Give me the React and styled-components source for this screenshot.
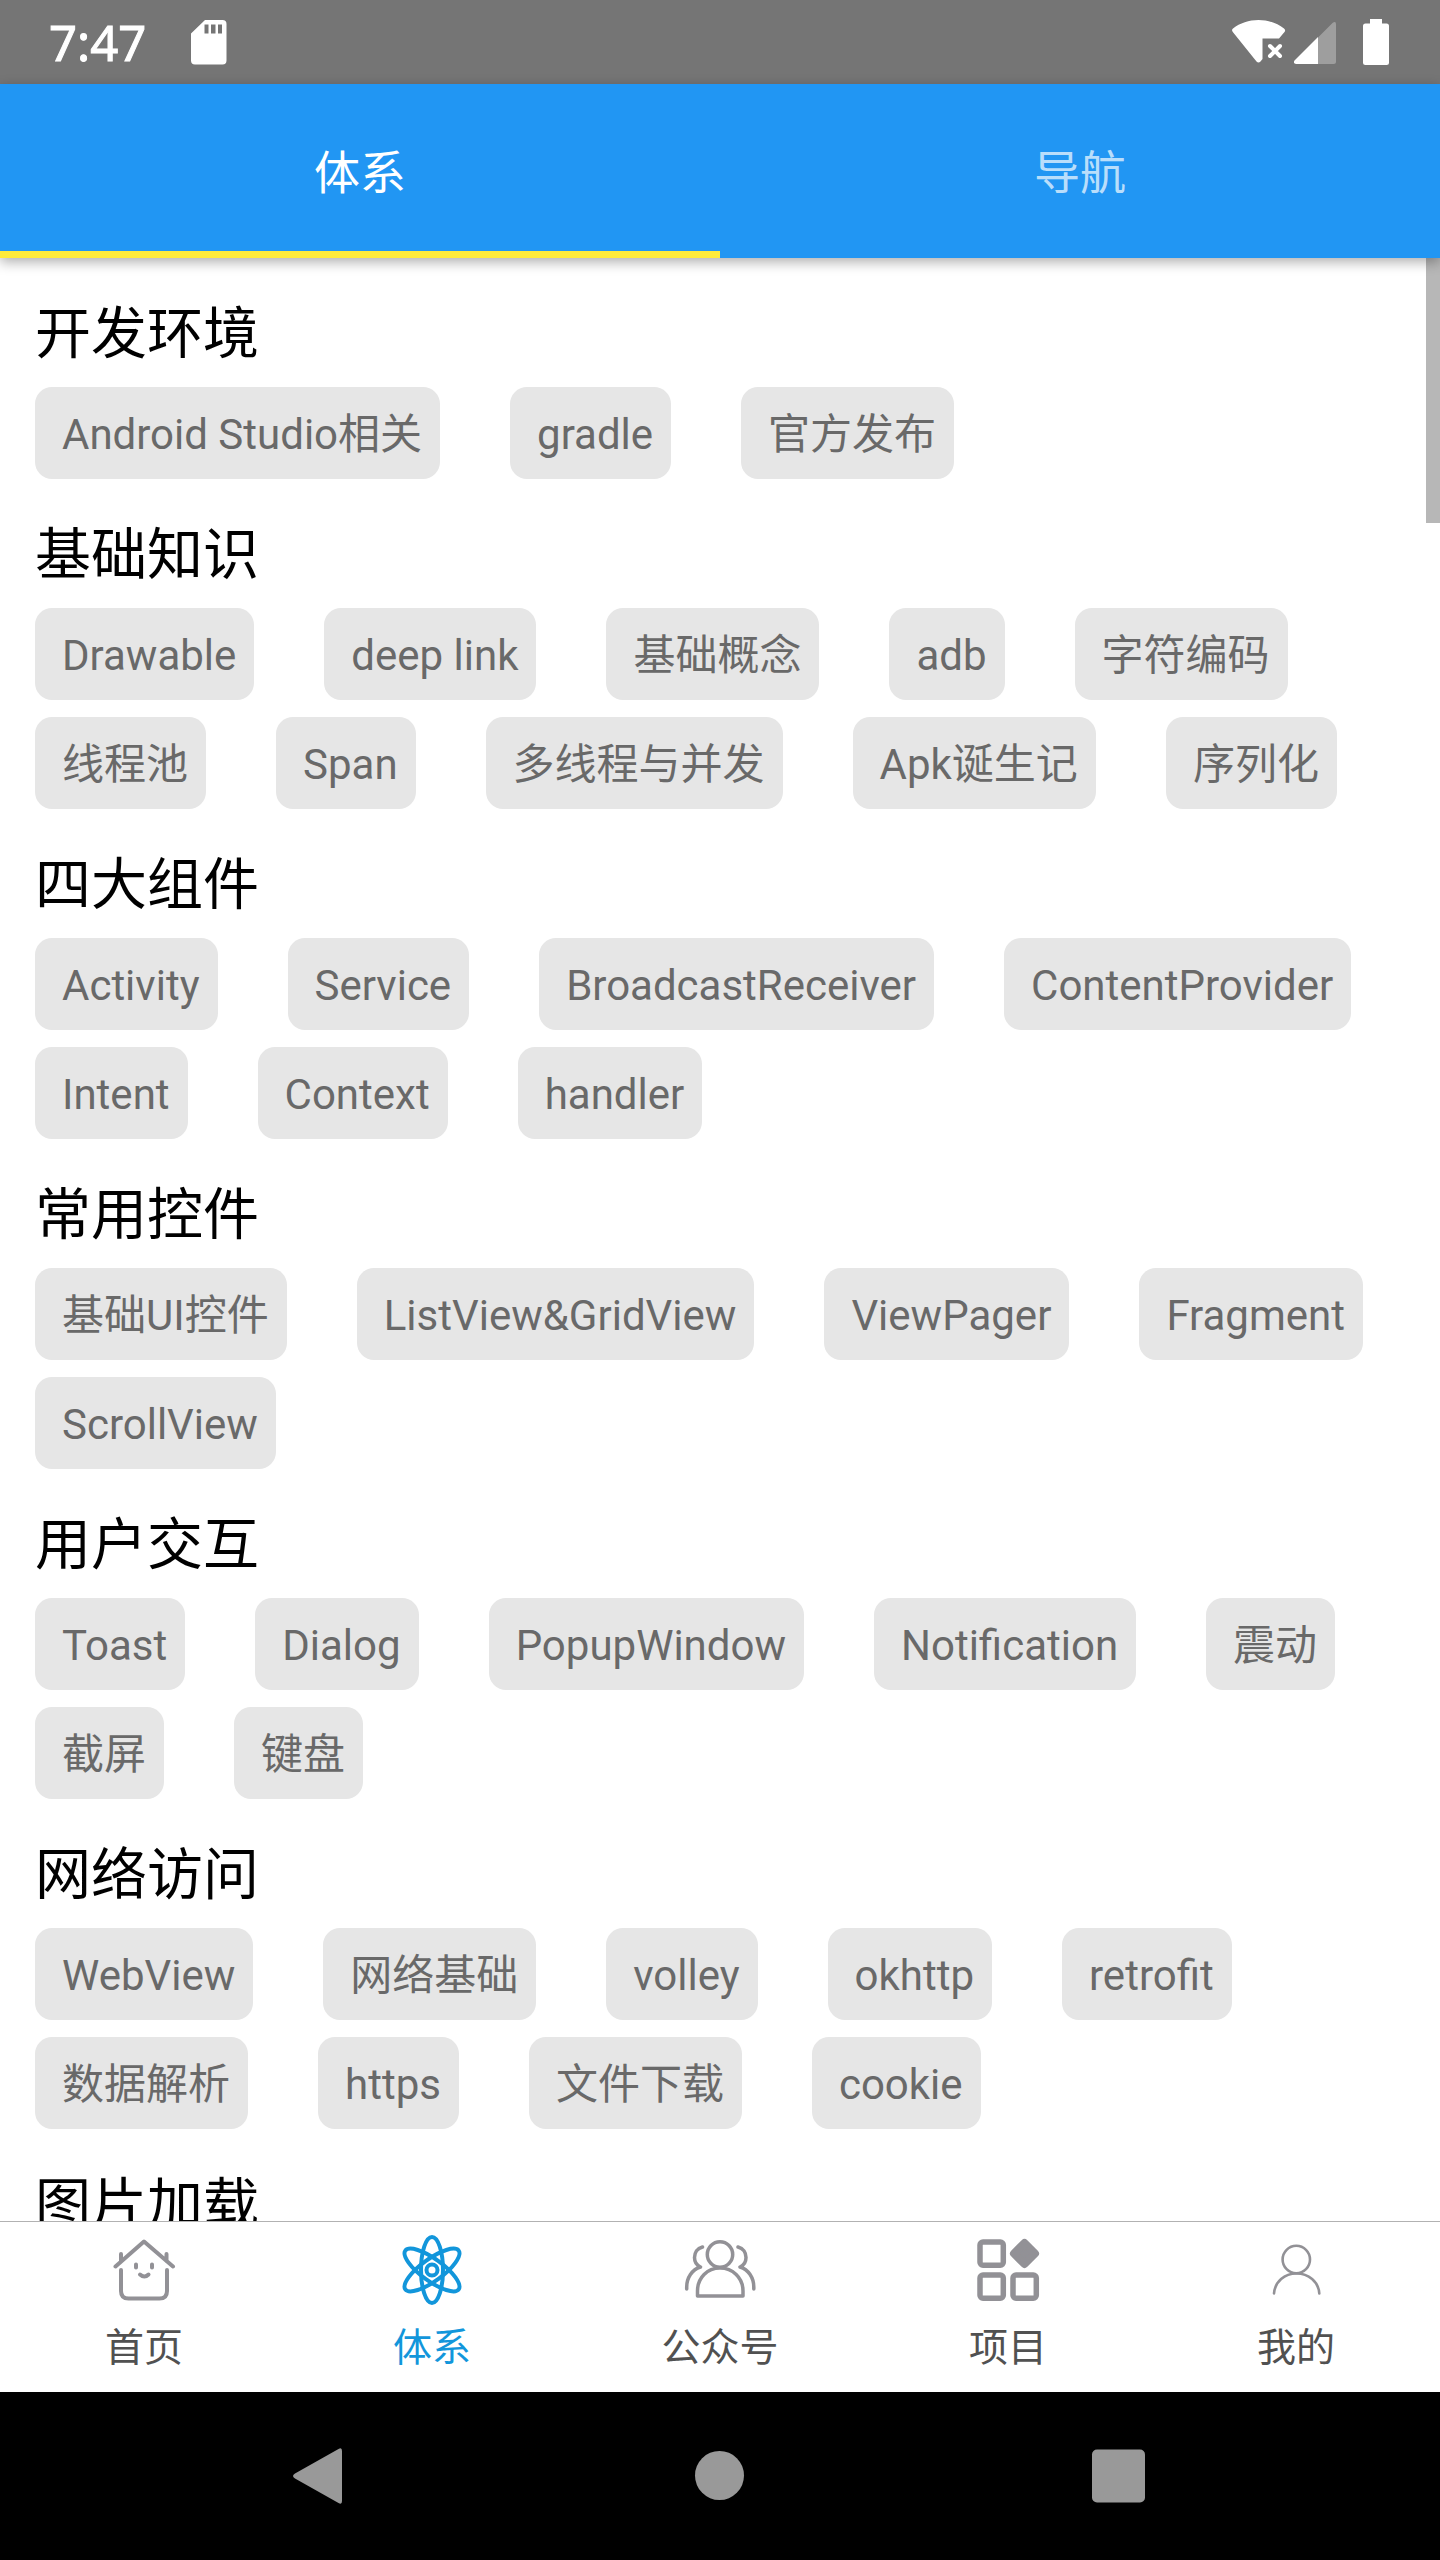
import React, { useState } from "react";
import styled, { createGlobalStyle } from "styled-components";

const GlobalStyle = createGlobalStyle`
  *, *::before, *::after { box-sizing: border-box; }
  body {
    margin: 0;
    background: #fff;
    font-family: Roboto, "Noto Sans CJK SC", sans-serif;
  }
  button {
    margin: 0;
    padding: 0;
    border: 0;
    background: none;
    font: inherit;
    cursor: pointer;
  }
`;

const Screen = styled.div`
  display: flex;
  flex-direction: column;
  height: 100vh;
  background: #fff;
`;

const StatusBar = styled.header`
  display: flex;
  flex: none;
  align-items: center;
  justify-content: space-between;
  height: 84px;
  padding: 0 32px 0 49px;
  background: #757575;
  color: #fff;
`;

const StatusGroup = styled.div`
  display: flex;
  align-items: center;
  gap: ${(p) => p.$gap}px;
`;

const Clock = styled.time`
  font-family: "Noto Sans", "Open Sans", sans-serif;
  font-size: 49px;
  font-weight: 400;
  line-height: 64px;
  -webkit-text-stroke: 1px currentColor;
`;

const TopTabs = styled.div`
  position: relative;
  z-index: 1;
  display: flex;
  flex: none;
  height: 174px;
  background: #2196f3;
  box-shadow: 0 4px 12px rgba(0, 0, 0, 0.32);
`;

const TopTab = styled.button`
  flex: 1;
  && {
    padding-top: 4px;
  }
  color: ${(p) => (p.$active ? "#fff" : "rgba(255, 255, 255, 0.7)")};
  font-size: 46px;
  line-height: 64px;
  box-shadow: ${(p) => (p.$active ? "inset 0 -7px #ffeb3b" : "none")};
`;

const Viewport = styled.div`
  position: relative;
  display: flex;
  flex: 1;
  min-height: 0;
`;

const Content = styled.main`
  flex: 1;
  overflow-y: auto;
  scrollbar-width: none;
`;

const ScrollThumb = styled.div`
  position: absolute;
  top: 0;
  right: 0;
  width: 14px;
  height: 265px;
  background: #b7b7b7;
`;

const Section = styled.section`
  padding: 35px 35px 0;
`;

const Title = styled.h2`
  margin: 0 0 12px;
  color: #000;
  font-size: 56px;
  font-weight: 400;
  line-height: 82px;
`;

const Chips = styled.div`
  display: flex;
  flex-wrap: wrap;
  gap: 17px 70px;
`;

const Chip = styled.button`
  && {
    padding: 17px 18px 13px 27px;
  }
  border-radius: 17px;
  background: #e6e6e6;
  color: #696969;
  font-size: 42px;
  line-height: 62px;
  white-space: nowrap;
`;

const BottomBar = styled.nav`
  display: flex;
  flex: none;
  border-top: 1px solid #b2b2b2;
  background: #fff;
`;

const BottomItem = styled.button`
  display: flex;
  flex: 1;
  flex-direction: column;
  align-items: center;
  gap: 17px;
  && {
    padding: 12px 0 19px;
  }
  color: ${(p) => (p.$active ? "#1296db" : "#515151")};
  font-size: 39px;
  line-height: 50px;

  svg {
    color: ${(p) => (p.$active ? "#1296db" : "#929196")};
  }
`;

const SystemNav = styled.footer`
  display: flex;
  flex: none;
  justify-content: center;
  height: 168px;
  background: #000;
  color: #999;
`;

const SystemKey = styled.button`
  display: flex;
  align-items: center;
  justify-content: center;
  width: 27.7%;
  color: inherit;
`;

const SdCard = () => (
  <svg width="36" height="48" viewBox="0 0 36 48" aria-hidden="true">
    <path
      fill="currentColor"
      fillRule="evenodd"
      d="M14 2H31.500a4 4 0 0 1 4 4V42.500a4 4 0 0 1-4 4H4a4 4 0 0 1-4-4V15.500ZM13.500 6.500v9h4v-9ZM20 6.500v9h4.500v-9ZM27 6.500v9h4v-9Z"
    />
  </svg>
);

const WifiOff = () => (
  <svg width="54" height="48" viewBox="0 0 54 48" aria-hidden="true">
    <path
      fill="currentColor"
      d="M1 10.500C8 5 17 2 26.500 2S45 5 52 10.500Q54 12 52.500 14L47 20.500H30.500V41L28.500 43.500Q26.500 45.500 24.500 43.500L.8 14Q-.8 12 1 10.500Z"
    />
    <path stroke="currentColor" strokeWidth="4" strokeLinecap="round" d="M38 28l10 10M48 28l-10 10" />
  </svg>
);

const Signal = () => (
  <svg width="42" height="48" viewBox="0 0 42 48" aria-hidden="true">
    <path fill="currentColor" opacity=".3" d="M24 19.500L38.500 5Q42 2.500 42 6.500V43.500Q42 46 39.500 46H24Z" />
    <path fill="currentColor" d="M24 19V46H2Q-1.500 45.500.5 42.500Z" />
  </svg>
);

const Battery = () => (
  <svg width="64" height="48" viewBox="0 0 64 48" aria-hidden="true">
    <path fill="currentColor" d="M26 1h12v4.500h4.500q2.500 0 2.500 2.500V44.500q0 2.500-2.500 2.500H21.500q-2.500 0-2.500-2.500V8q0-2.500 2.500-2.500H26Z" />
  </svg>
);

const NavIcon = ({ width = 4, children }) => (
  <svg
    width="72"
    height="72"
    viewBox="0 0 72 72"
    fill="none"
    stroke="currentColor"
    strokeWidth={width}
    strokeLinecap="round"
    strokeLinejoin="round"
    aria-hidden="true"
  >
    {children}
  </svg>
);

const HomeIcon = () => (
  <NavIcon>
    <path d="M7.500 32.500L36 7.500 65 32.500M13 20v7M58.500 20v7M13 36V57q0 7.500 7.500 7.500H51.500q7.500 0 7.500-7.500V36" />
    <path d="M28 30.500v3M44 30.500v3M32 40.500q4.500 4 8.500 0" />
  </NavIcon>
);

const AtomIcon = () => (
  <NavIcon>
    <ellipse cx="36" cy="36" rx="11" ry="33" />
    <ellipse cx="36" cy="36" rx="11" ry="33" transform="rotate(54 36 36)" />
    <ellipse cx="36" cy="36" rx="11" ry="33" transform="rotate(-54 36 36)" />
    <circle cx="36" cy="36" r="5.500" />
  </NavIcon>
);

const PeopleIcon = () => (
  <NavIcon width={3.5}>
    <circle cx="36" cy="20.500" r="12.700" />
    <path d="M13.500 62V57C13.500 43.500 23.500 34 36 34S59 43.500 59 57V62Z" />
    <path d="M18.500 13C13 14.500 10.500 19 10.500 23.500 10.500 28 13 31.500 16.500 33 8 35.500 2.700 44 2.700 53V55" />
    <path d="M54 13C59.500 14.500 62 19 62 23.500 62 28 59.500 31.500 56 33 64.500 35.500 69.800 44 69.800 53V55" />
  </NavIcon>
);

const GridIcon = () => (
  <NavIcon width={5.5}>
    <rect x="8" y="8" width="23.300" height="23.300" rx="3" />
    <rect x="8" y="41" width="23.300" height="23.300" rx="3" />
    <rect x="41" y="41" width="23.300" height="23.300" rx="3" />
    <path fill="currentColor" strokeWidth="8" d="M52.500 9L63 19.500 52.500 30 42 19.500Z" />
  </NavIcon>
);

const PersonIcon = () => (
  <NavIcon width={2.6}>
    <circle cx="36.300" cy="25.500" r="13.700" />
    <path d="M14 59.500C15 47.500 24.500 39.500 36.500 39.500S58.500 47.500 59.300 59.500" />
  </NavIcon>
);

const KeyIcon = ({ children }) => (
  <svg width="56" height="56" viewBox="0 0 56 56" fill="currentColor" aria-hidden="true">
    {children}
  </svg>
);

const topTabs = ["体系", "导航"];

const sections = [
  { title: "开发环境", items: ["Android Studio相关", "gradle", "官方发布"] },
  {
    title: "基础知识",
    items: ["Drawable", "deep link", "基础概念", "adb", "字符编码", "线程池", "Span", "多线程与并发", "Apk诞生记", "序列化"],
  },
  {
    title: "四大组件",
    items: ["Activity", "Service", "BroadcastReceiver", "ContentProvider", "Intent", "Context", "handler"],
  },
  { title: "常用控件", items: ["基础UI控件", "ListView&GridView", "ViewPager", "Fragment", "ScrollView"] },
  { title: "用户交互", items: ["Toast", "Dialog", "PopupWindow", "Notification", "震动", "截屏", "键盘"] },
  {
    title: "网络访问",
    items: ["WebView", "网络基础", "volley", "okhttp", "retrofit", "数据解析", "https", "文件下载", "cookie"],
  },
  { title: "图片加载", items: [] },
];

const bottomItems = [
  { label: "首页", Icon: HomeIcon },
  { label: "体系", Icon: AtomIcon },
  { label: "公众号", Icon: PeopleIcon },
  { label: "项目", Icon: GridIcon },
  { label: "我的", Icon: PersonIcon },
];

export default function App() {
  const [tab, setTab] = useState(0);
  const [page, setPage] = useState(1);

  return (
    <Screen>
      <GlobalStyle />
      <StatusBar>
        <StatusGroup $gap={45}>
          <Clock>7:47</Clock>
          <SdCard />
        </StatusGroup>
        <StatusGroup $gap={8}>
          <WifiOff />
          <Signal />
          <Battery />
        </StatusGroup>
      </StatusBar>

      <TopTabs role="tablist">
        {topTabs.map((name, i) => (
          <TopTab key={name} role="tab" aria-selected={i === tab} $active={i === tab} onClick={() => setTab(i)}>
            {name}
          </TopTab>
        ))}
      </TopTabs>

      <Viewport>
        <Content>
          {sections.map(({ title, items }) => (
            <Section key={title}>
              <Title>{title}</Title>
              <Chips>
                {items.map((item) => (
                  <Chip key={item}>{item}</Chip>
                ))}
              </Chips>
            </Section>
          ))}
        </Content>
        <ScrollThumb />
      </Viewport>

      <BottomBar>
        {bottomItems.map(({ label, Icon }, i) => (
          <BottomItem key={label} $active={i === page} onClick={() => setPage(i)}>
            <Icon />
            {label}
          </BottomItem>
        ))}
      </BottomBar>

      <SystemNav>
        <SystemKey aria-label="Back">
          <KeyIcon>
            <path d="M2 25.500L45.500 1Q49 -1 49 3V53Q49 57 45.500 55L2 30.500Q-2 28 2 25.500Z" />
          </KeyIcon>
        </SystemKey>
        <SystemKey aria-label="Home">
          <KeyIcon>
            <circle cx="27.500" cy="27.500" r="24.500" />
          </KeyIcon>
        </SystemKey>
        <SystemKey aria-label="Overview">
          <KeyIcon>
            <rect x="1" y="1.500" width="53" height="53" rx="5" />
          </KeyIcon>
        </SystemKey>
      </SystemNav>
    </Screen>
  );
}
